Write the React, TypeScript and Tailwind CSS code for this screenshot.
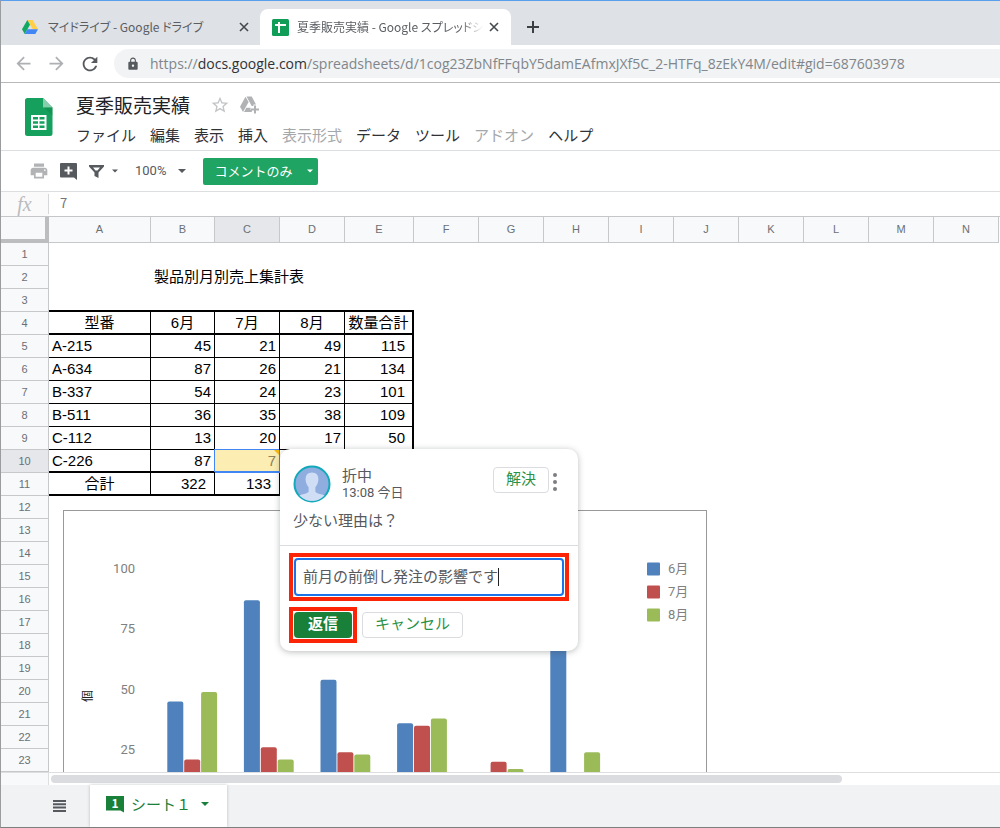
import { useState } from "react";
import clsx from "clsx";
import { MdArrowBack, MdArrowForward, MdLock, MdPrint, MdRefresh, MdStarBorder } from "react-icons/md";

const columns = [
  { name: "A", width: 102 },
  { name: "B", width: 64 },
  { name: "C", width: 65 },
  { name: "D", width: 65 },
  { name: "E", width: 69 },
  ...["F", "G", "H", "I", "J", "K", "L", "M", "N"].map((name) => ({ name, width: 65 })),
];

const menus = [
  { label: "ファイル" },
  { label: "編集" },
  { label: "表示" },
  { label: "挿入" },
  { label: "表示形式", disabled: true },
  { label: "データ" },
  { label: "ツール" },
  { label: "アドオン", disabled: true },
  { label: "ヘルプ" },
];

const sales = [
  { model: "A-215", months: [45, 21, 49], total: 115 },
  { model: "A-634", months: [87, 26, 21], total: 134 },
  { model: "B-337", months: [54, 24, 23], total: 101 },
  { model: "B-511", months: [36, 35, 38], total: 109 },
  { model: "C-112", months: [13, 20, 17], total: 50 },
  { model: "C-226", months: [87, 7, 24] },
];

const series = [
  { name: "6月", color: "#4f81bd" },
  { name: "7月", color: "#c0504d" },
  { name: "8月", color: "#9bbb59" },
];

function Caret({ className }: { className?: string }) {
  return (
    <svg viewBox="0 0 8 4" className={clsx("h-1 shrink-0", className)} fill="currentColor" aria-hidden="true">
      <path d="M0 0h8L4 4z" />
    </svg>
  );
}

function CloseIcon() {
  return (
    <svg viewBox="0 0 10 10" className="size-2.5" stroke="#45494d" strokeWidth="1.6" aria-hidden="true">
      <path d="M1 1l8 8M9 1L1 9" />
    </svg>
  );
}

function DriveIcon() {
  return (
    <svg viewBox="0 0 24 21" className="h-3.5 w-4 shrink-0" aria-hidden="true">
      <path d="M8 0h8l8 14h-8z" fill="#ffcf48" />
      <path d="M8 0L0 14l4 7 8-14z" fill="#11a861" />
      <path d="M8 14h16l-4 7H4z" fill="#4285f4" />
    </svg>
  );
}

function AddToDriveIcon() {
  return (
    <svg viewBox="0 0 19 18" className="h-[18px] w-[19px]" fill="#b0b2b4" aria-hidden="true">
      <path d="M5.500.800L0 10.800l3 5.200L8.600 6z" />
      <path d="M6.500.500h5.200l4.300 8h-2.500V10h-1.800z" />
      <path d="M6.300 11.800h4.200v2h1.300V16H4z" />
      <path d="M14 9.500h2v3h3v2h-3v3h-2v-3h-3v-2h3z" />
    </svg>
  );
}

function SheetsTabIcon() {
  return (
    <svg viewBox="0 0 17 17" className="size-[17px] shrink-0" aria-hidden="true">
      <rect width="17" height="17" rx="1.5" fill="#0f9d58" />
      <path d="M3 6h11M7 3v11" stroke="#fff" strokeWidth="2" />
    </svg>
  );
}

function SheetsLogo() {
  return (
    <svg viewBox="0 0 28 38" className="h-[38px] w-7 shrink-0" aria-hidden="true">
      <path d="M2.500 0H18l9.500 9.500v26a2.500 2.500 0 0 1-2.500 2.500H2.500A2.500 2.500 0 0 1 0 35.500v-33A2.500 2.500 0 0 1 2.500 0z" fill="#16a05d" />
      <path d="M18 0l9.500 9.500H18z" fill="#87ceac" />
      <path d="M27.500 9.500v8L19 9.500z" fill="#0b8043" opacity=".35" />
      <path d="M6 17h15.500v15H6z" fill="#fff" />
      <path d="M8 19h5v2.500H8zM14.500 19h5v2.500h-5zM8 23.300h5v2.500H8zM14.500 23.300h5v2.500h-5zM8 27.600h5v2.500H8zM14.500 27.600h5v2.500h-5z" fill="#16a05d" />
    </svg>
  );
}

function AddCommentIcon() {
  return (
    <svg viewBox="0 0 17 17" className="size-[17px]" aria-hidden="true">
      <path d="M1 0h15a1 1 0 0 1 1 1v16l-3-2.500H1a1 1 0 0 1-1-1V1a1 1 0 0 1 1-1z" fill="#56595d" />
      <path d="M8.500 3.500v8M4.500 7.500h8" stroke="#fff" strokeWidth="2" />
    </svg>
  );
}

function FilterIcon() {
  return (
    <svg viewBox="0 0 15 13" className="h-[13px] w-[15px]" aria-hidden="true">
      <path d="M0 0h15v1.500L9.500 7.500V13L5.500 11V7.500L0 1.500z" fill="#56595d" />
      <path d="M4 2.500h7L8.500 5.500h-2z" fill="#fff" />
    </svg>
  );
}

function Avatar() {
  return (
    <svg viewBox="0 0 38 38" className="size-[38px] shrink-0" aria-hidden="true">
      <defs>
        <clipPath id="face">
          <circle cx="19" cy="19" r="17" />
        </clipPath>
      </defs>
      <circle cx="19" cy="19" r="17.500" fill="#8fadde" stroke="#12a9bb" strokeWidth="2" />
      <g clipPath="url(#face)" fill="#cfddf5">
        <path d="M19 7.500c4.500 0 6.600 3 6.400 7-.2 3.600-1.500 6-3 7.800v4.500c1.500 2.500 9 2.200 10.600 5V38H5v-6.200c1.600-2.800 9.100-2.500 10.600-5v-4.500c-1.500-1.800-2.800-4.200-3-7.800-.2-4 1.900-7 6.400-7z" />
      </g>
    </svg>
  );
}

function BrowserTabs() {
  return (
    <div className="flex h-11 shrink-0 items-end bg-[#dee1e6] text-xs text-[#5a5e62]">
      <div className="flex h-9 w-[259px] items-center pr-[11px] pl-[21px]">
        <DriveIcon />
        <span className="ml-2.5 flex-1 whitespace-nowrap [font-feature-settings:'palt']">マイドライブ - Google ドライブ</span>
        <button aria-label="タブを閉じる"><CloseIcon /></button>
      </div>
      <div className="flex h-9 w-[251px] items-center rounded-t-lg bg-white pr-3 pl-3">
        <SheetsTabIcon />
        <span className="mr-1.5 ml-2 flex-1 overflow-hidden whitespace-nowrap [font-feature-settings:'palt'] [mask-image:linear-gradient(to_right,black_88%,transparent)]">
          夏季販売実績 - Google スプレッドシ
        </span>
        <button aria-label="タブを閉じる"><CloseIcon /></button>
      </div>
      <button aria-label="新しいタブ" className="flex h-9 w-11 items-center justify-center">
        <svg viewBox="0 0 12 12" className="size-3" stroke="#3c4043" strokeWidth="2" aria-hidden="true">
          <path d="M6 0v12M0 6h12" />
        </svg>
      </button>
    </div>
  );
}

function AddressBar() {
  return (
    <div className="flex h-[38px] shrink-0 items-center border-b border-[#b6b8ba] bg-white pl-3">
      <div className="flex w-[101px] gap-3">
        <button aria-label="戻る"><MdArrowBack size={21} color="#aeb0b3" /></button>
        <button aria-label="進む"><MdArrowForward size={21} color="#aeb0b3" /></button>
        <button aria-label="再読み込み"><MdRefresh size={22} color="#56595d" /></button>
      </div>
      <div className="flex h-[29px] flex-1 items-center gap-2.5 overflow-hidden rounded-l-full bg-[#f1f3f4] pl-3 font-['Open_Sans',sans-serif] text-sm whitespace-nowrap text-[#80868b]">
        <MdLock size={14} color="#56595d" className="shrink-0" />
        <span>
          https://<span className="text-[#303236]">docs.google.com</span>/spreadsheets/d/1cog23ZbNfFFqbY5damEAfmxJXf5C_2-HTFq_8zEkY4M/edit#gid=687603978
        </span>
      </div>
    </div>
  );
}

function DocHeader() {
  return (
    <header className="flex h-[68px] shrink-0 border-b border-[#dcdee0] pl-6">
      <div className="w-[51px] pt-[15px]"><SheetsLogo /></div>
      <div className="pt-2">
        <div className="flex h-7 items-center">
          <h1 className="mr-5 text-[19px] leading-7 text-[#202124]">夏季販売実績</h1>
          <button aria-label="スターを付ける" className="mr-2.5"><MdStarBorder size={20} color="#c2c4c6" /></button>
          <button aria-label="ドライブに追加"><AddToDriveIcon /></button>
        </div>
        <nav className="mt-1.5 flex gap-3.5 text-[15px] leading-5">
          {menus.map((menu) => (
            <button key={menu.label} disabled={menu.disabled} className="text-[#303236] disabled:text-[#a5a8ab]">{menu.label}</button>
          ))}
        </nav>
      </div>
    </header>
  );
}

function Toolbar() {
  return (
    <div className="flex h-[41px] shrink-0 items-center border-b border-[#dcdee0] pl-7 text-[#56595d]">
      <button aria-label="印刷" disabled><MdPrint size={20} color="#b1b3b5" /></button>
      <button aria-label="コメントを追加" className="ml-[11px]"><AddCommentIcon /></button>
      <button aria-label="フィルタ" className="ml-3 flex items-center gap-2">
        <FilterIcon />
        <Caret className="w-1.5" />
      </button>
      <button className="ml-[17px] flex items-center gap-3 font-[Roboto,sans-serif] text-[13px]">
        100%
        <Caret className="w-2" />
      </button>
      <button className="ml-[17px] flex h-[27px] w-[115px] items-center justify-between rounded-xs bg-[#1fa463] pr-[5px] pl-[11px] text-[13px] text-white">
        コメントのみ
        <Caret className="w-1.5" />
      </button>
    </div>
  );
}

function FormulaBar() {
  return (
    <div className="flex h-[25px] shrink-0 items-center border-b border-[#c4c6c8] bg-[#fafafb]">
      <span className="w-12 border-r border-[#d5d7d9] text-center font-['Liberation_Serif',serif] text-xl leading-5 text-[#b9bbbe] italic">fx</span>
      <input aria-label="数式" readOnly defaultValue="7" className="h-full flex-1 bg-white pb-1 pl-[11px] text-[13px] text-[#70757a] outline-none" />
    </div>
  );
}

function Sheet() {
  const cell = "border-r border-b border-black";
  const head = "border-r border-b border-[#c6c8ca] p-0 text-center text-[11px] font-normal text-[#6b7075]";
  const rowHead = (row: number) => (
    <th scope="row" className={clsx(head, row === 10 ? "bg-[#e5e7ea]" : "bg-[#f8f9fa]")}>{row}</th>
  );
  return (
    <table className="w-max table-fixed border-separate border-spacing-0 font-['Liberation_Sans','Noto_Sans_CJK_JP',sans-serif] text-[15px] leading-[21px] text-black">
      <colgroup>
        <col style={{ width: 48 }} />
        {columns.map((column) => <col key={column.name} style={{ width: column.width }} />)}
      </colgroup>
      <thead>
        <tr className="h-[26px]">
          <td className="border-r-4 border-b-4 border-[#bcbdbe] bg-[#f8f9fa] p-0" />
          {columns.map((column) => (
            <th key={column.name} scope="col" className={clsx(head, column.name === "C" ? "bg-[#e5e7ea]" : "bg-[#f8f9fa]")}>{column.name}</th>
          ))}
        </tr>
      </thead>
      <tbody className="[&_td]:px-[3px] [&_td]:py-0 [&_td]:align-top [&_td]:whitespace-nowrap [&_tr]:h-[23px]">
        <tr>{rowHead(1)}</tr>
        <tr>
          {rowHead(2)}
          <td />
          <td colSpan={3}>製品別月別売上集計表</td>
        </tr>
        <tr>
          {rowHead(3)}
          <td colSpan={5} className="border-b-2 border-black" />
        </tr>
        <tr className="text-center">
          {rowHead(4)}
          <td className={clsx(cell, "border-b-2")}>型番</td>
          {series.map((month) => <td key={month.name} className={clsx(cell, "border-b-2")}>{month.name}</td>)}
          <td className={clsx(cell, "border-r-2 border-b-2")}>数量合計</td>
        </tr>
        {sales.map((item, i) => {
          const last = i === sales.length - 1;
          return (
            <tr key={item.model} className="text-right">
              {rowHead(i + 5)}
              <td className={clsx(cell, "text-left", last && "border-b-2")}>{item.model}</td>
              {item.months.map((value, m) =>
                last && m === 1 ? (
                  <td key={m} className="relative border-r border-b-2 border-[#4285f4] bg-[#fceeb2] text-[#8a7f60] shadow-[-1px_-1px_0_#4285f4]">
                    {value}
                    <span className="absolute top-0 right-0 border-t-[5px] border-l-[5px] border-t-[#f5b916] border-l-transparent" />
                  </td>
                ) : (
                  <td key={m} className={clsx(cell, last && "border-b-2")}>{value}</td>
                )
              )}
              <td className={clsx(cell, "border-r-2", last && "border-b-2")}><span className="pr-1">{item.total}</span></td>
            </tr>
          );
        })}
        <tr className="text-right">
          {rowHead(11)}
          <td className={clsx(cell, "border-b-2 text-center")}>合計</td>
          <td className={clsx(cell, "border-b-2")}><span className="pr-[5px]">322</span></td>
          <td className={clsx(cell, "border-b-2")}><span className="pr-[5px]">133</span></td>
        </tr>
        {Array.from({ length: 12 }, (_, i) => <tr key={i}>{rowHead(i + 12)}</tr>)}
      </tbody>
    </table>
  );
}

function SalesChart() {
  // 25 units are 60px high, the zero line sits below the visible area
  const y = (value: number) => 300 - value * 2.41;
  return (
    <svg width="644" height="340" className="bg-white font-[Roboto,'Noto_Sans_CJK_JP',sans-serif] text-[13px]" role="img" aria-label="製品別月別売上">
      <rect x="0.5" y="0.5" width="643" height="339" fill="none" stroke="#999" />
      {[25, 50, 75, 100].map((tick) => (
        <text key={tick} x="72" y={y(tick) + 4} textAnchor="end" fill="#808080">{tick}</text>
      ))}
      <text transform="translate(29 186) rotate(-90)" textAnchor="middle" fontSize="12" fill="#222">個</text>
      {sales.map((item, group) =>
        item.months.map((value, m) => (
          <rect key={`${group}-${m}`} x={104.300 + group * 76.600 + m * 16.900} y={y(value)} width="16" height={value * 2.41} rx="2" fill={series[m].color} />
        ))
      )}
      {series.map((month, i) => (
        <g key={month.name}>
          <rect x="584" y={52.5 + i * 23} width="13" height="13" rx="1" fill={month.color} />
          <text x="605" y={63 + i * 23} fill="#808080">{month.name}</text>
        </g>
      ))}
    </svg>
  );
}

function CommentCard() {
  const [reply, setReply] = useState("前月の前倒し発注の影響です");
  return (
    <section className="w-[298px] rounded-[10px] bg-white pb-2 text-[15px] text-[#56595d] shadow-[0_1px_6px_rgba(60,64,67,0.35)]">
      <div className="flex items-start px-[13px] pt-4">
        <Avatar />
        <div className="ml-[11px] flex-1">
          <p className="leading-5">折中</p>
          <p className="font-[Roboto,'Noto_Sans_CJK_JP',sans-serif] text-[13px] leading-4">13:08 今日</p>
        </div>
        <button className="mt-0.5 h-[26px] w-14 rounded border border-[#dadce0] pb-1 leading-5 text-[#2b9348]">解決</button>
        <button aria-label="その他" className="mt-2 flex w-4 flex-col items-center gap-[3px] pr-1">
          {[0, 1, 2].map((dot) => <span key={dot} className="size-1 rounded-full bg-[#7b7e82]" />)}
        </button>
      </div>
      <p className="mt-2 px-[13px] leading-[18px]">少ない理由は？</p>
      <div className="mt-4 border-t border-[#dadce0] px-[9px] pt-[7px]">
        <label className="block border-4 border-[#fb2407] bg-white p-px">
          <span className="flex h-[38px] items-center rounded border-2 border-[#1a73e8] px-[7px]">
            <input aria-label="返信" value={reply} onChange={(e) => setReply(e.target.value)} className="field-sizing-content h-8 pb-1 caret-transparent outline-none" />
            <span className="h-[18px] w-px bg-[#202124]" />
          </span>
        </label>
        <div className="mt-1.5 flex items-center gap-[5px]">
          <div className="border-4 border-[#fb2407] p-px">
            <button className="block h-[26px] w-[58px] rounded bg-[#188038] pb-1 leading-5 font-bold text-white">返信</button>
          </div>
          <button className="h-[26px] w-[101px] rounded border border-[#dadce0] pb-1 leading-5 text-[#2b9348]">キャンセル</button>
        </div>
      </div>
    </section>
  );
}

function SheetTabs() {
  return (
    <footer className="flex h-[42px] shrink-0 items-stretch bg-[#f1f2f4] pl-[52px]">
      <button aria-label="すべてのシート" className="mr-6">
        <svg viewBox="0 0 13 12" className="h-3 w-[13px]" stroke="#56595d" strokeWidth="2" aria-hidden="true">
          <path d="M0 1h13M0 4.300h13M0 7.600h13M0 11h13" />
        </svg>
      </button>
      <button className="flex w-[137px] items-center bg-white px-4 pb-1 text-[15px] text-[#188038] shadow-[0_0_3px_rgba(60,64,67,0.3)]">
        <span className="flex h-[17px] w-[18px] items-center justify-center bg-[#188038] pb-0.5 text-xs font-bold text-white [clip-path:polygon(0_0,100%_0,100%_100%,80%_88%,0_88%)]">1</span>
        <span className="ml-[7px]">シート１</span>
        <Caret className="ml-2.5 w-2" />
      </button>
    </footer>
  );
}

export default function App() {
  return (
    <div className="flex h-screen flex-col overflow-hidden border-t border-b border-l border-t-[#5a9fee] border-b-[#7c7e80] border-l-[#9b9c9e] bg-white font-['Noto_Sans_CJK_JP',sans-serif]">
      <BrowserTabs />
      <AddressBar />
      <DocHeader />
      <Toolbar />
      <FormulaBar />
      <main className="relative min-h-0 flex-1 overflow-hidden">
        <Sheet />
        <div className="absolute top-[293px] left-[62px]"><SalesChart /></div>
        <div className="absolute top-[232px] left-[279px]"><CommentCard /></div>
      </main>
      <div className="flex h-[13px] shrink-0 border-t border-[#dcdee0]">
        <div className="w-12 shrink-0 border-r border-[#dcdee0] bg-[#f8f9fa]" />
        <div className="flex-1 py-0.5 pl-0.5">
          <div className="h-2 w-5/6 rounded-full bg-[#dadce0]" />
        </div>
      </div>
      <SheetTabs />
    </div>
  );
}
